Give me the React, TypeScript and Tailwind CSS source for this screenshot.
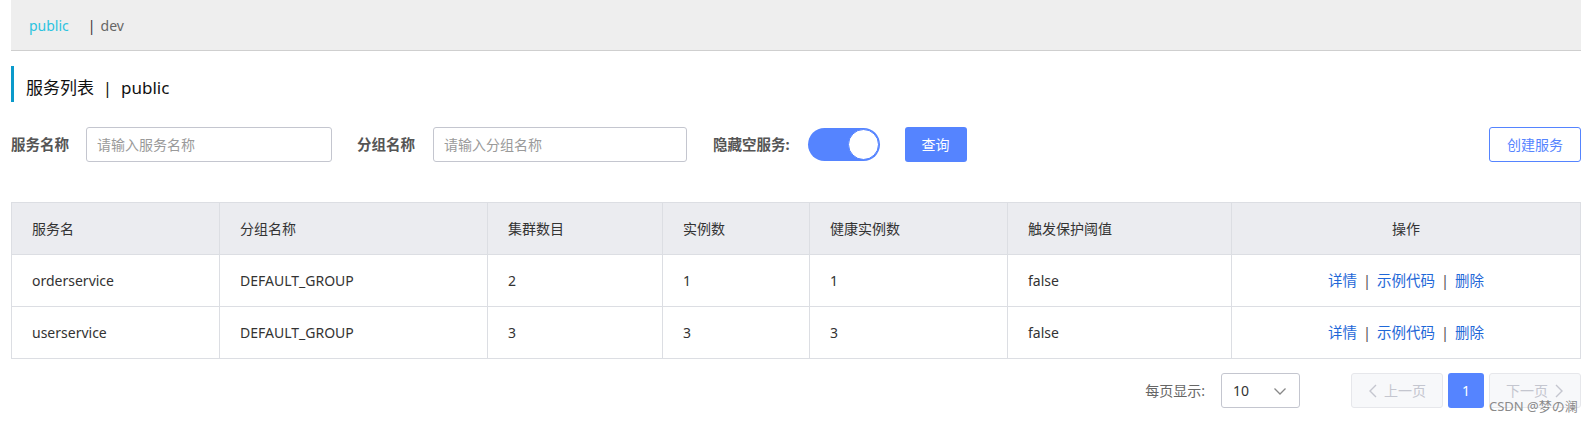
import * as React from "react";

type Row = {
  name: string;
  group: string;
  clusters: number;
  instances: number;
  healthy: number;
  threshold: string;
};

const rows: Row[] = [
  { name: "orderservice", group: "DEFAULT_GROUP", clusters: 2, instances: 1, healthy: 1, threshold: "false" },
  { name: "userservice", group: "DEFAULT_GROUP", clusters: 3, instances: 3, healthy: 3, threshold: "false" },
];

const font = {
  fontFamily: '"Noto Sans", "Noto Sans CJK SC", sans-serif',
};

export default function App() {
  return (
    <div className="relative h-[422px] w-[1591px] bg-white pl-[11px] pr-[10px] text-[14px] text-[#333]" style={font}>
      {/* namespace bar */}
      <div className="flex h-[51px] items-center border-b border-[#cfcfcf] bg-[#eeeeee] pl-[18px]">
        <span className="text-[#2cc3e0]">public</span>
        <span className="ml-[19px] text-[#333]">|</span>
        <span className="ml-[5px] text-[#666]">dev</span>
      </div>

      {/* title */}
      <div className="mt-[15px] flex h-[36px] items-end border-l-[3px] border-[#0a9acb] pb-[2px] pl-[12px] text-[17px] leading-[24px] text-[#111]">
        服务列表&nbsp;&nbsp;|&nbsp;&nbsp;public
      </div>

      {/* search row */}
      <div className="mt-[25px] flex h-[35px] items-center">
        <span className="text-[14.5px] font-bold text-[#555]">服务名称</span>
        <input
          className="ml-[17px] h-[35px] w-[246px] rounded-[3px] border border-[#c4c6cf] px-[10px] text-[14px] outline-none placeholder:text-[#9a9a9a]"
          placeholder="请输入服务名称"
        />
        <span className="ml-[25px] text-[14.5px] font-bold text-[#555]">分组名称</span>
        <input
          className="ml-[18px] h-[35px] w-[254px] rounded-[3px] border border-[#c4c6cf] px-[10px] text-[14px] outline-none placeholder:text-[#9a9a9a]"
          placeholder="请输入分组名称"
        />
        <span className="ml-[26px] text-[14.5px] font-bold text-[#555]">隐藏空服务:</span>
        <div className="ml-[18px] flex h-[33px] w-[72px] items-center justify-end rounded-full bg-[#5584ff] pr-[1px]">
          <div className="h-[31px] w-[31px] rounded-full border border-[#5584ff] bg-white" />
        </div>
        <button className="ml-[25px] h-[35px] w-[62px] rounded-[3px] bg-[#5584ff] text-[14px] text-white">
          查询
        </button>
        <div className="flex-1" />
        <button className="h-[35px] w-[92px] rounded-[3px] border border-[#5584ff] bg-white text-[14px] text-[#5584ff]">
          创建服务
        </button>
      </div>

      {/* table */}
      <table className="mt-[40px] w-[1570px] table-fixed border-collapse border border-[#dcdee3]">
        <colgroup>
          <col className="w-[208px]" />
          <col className="w-[268px]" />
          <col className="w-[175px]" />
          <col className="w-[147px]" />
          <col className="w-[198px]" />
          <col className="w-[224px]" />
          <col />
        </colgroup>
        <thead>
          <tr className="h-[52px] bg-[#ebecf0] text-left">
            {["服务名", "分组名称", "集群数目", "实例数", "健康实例数", "触发保护阈值"].map((h) => (
              <th key={h} className="border border-[#dcdee3] pl-[20px] font-normal">
                {h}
              </th>
            ))}
            <th className="border border-[#dcdee3] text-center font-normal">操作</th>
          </tr>
        </thead>
        <tbody>
          {rows.map((r) => (
            <tr key={r.name} className="h-[52px]">
              <td className="border border-[#dcdee3] pl-[20px]">{r.name}</td>
              <td className="border border-[#dcdee3] pl-[20px]">{r.group}</td>
              <td className="border border-[#dcdee3] pl-[20px]">{r.clusters}</td>
              <td className="border border-[#dcdee3] pl-[20px]">{r.instances}</td>
              <td className="border border-[#dcdee3] pl-[20px]">{r.healthy}</td>
              <td className="border border-[#dcdee3] pl-[20px]">{r.threshold}</td>
              <td className="border border-[#dcdee3] text-center text-[14.5px]">
                <a className="text-[#1f68d8]">详情</a>
                <span className="mx-[6px] text-[#555]">|</span>
                <a className="text-[#1f68d8]">示例代码</a>
                <span className="mx-[6px] text-[#555]">|</span>
                <a className="text-[#1f68d8]">删除</a>
              </td>
            </tr>
          ))}
        </tbody>
      </table>

      {/* pagination */}
      <div className="mt-[14px] flex h-[35px] items-center justify-end">
        <span className="text-[#666]">每页显示:</span>
        <div className="ml-[16px] flex h-[35px] w-[79px] items-center justify-between rounded-[3px] border border-[#c4c6cf] pl-[11px] pr-[12px]">
          <span className="text-[#333]">10</span>
          <svg width="14" height="14" viewBox="0 0 14 14" fill="none" stroke="#888" strokeWidth="1.3">
            <path d="M1.5 4.5 L7 10 L12.5 4.5" />
          </svg>
        </div>
        <button className="ml-[51px] flex h-[35px] w-[92px] items-center justify-center gap-[6px] rounded-[3px] border border-[#e6e7eb] bg-[#f7f8fa] text-[#c4c6cf]">
          <svg width="10" height="14" viewBox="0 0 10 14" fill="none" stroke="#c4c6cf" strokeWidth="1.4">
            <path d="M8 1 L2 7 L8 13" />
          </svg>
          上一页
        </button>
        <button className="ml-[5px] h-[35px] w-[36px] rounded-[3px] bg-[#5584ff] text-white">1</button>
        <button className="ml-[5px] flex h-[35px] w-[92px] items-center justify-center gap-[6px] rounded-[3px] border border-[#e6e7eb] bg-[#f7f8fa] text-[#c4c6cf]">
          下一页
          <svg width="10" height="14" viewBox="0 0 10 14" fill="none" stroke="#c4c6cf" strokeWidth="1.4">
            <path d="M2 1 L8 7 L2 13" />
          </svg>
        </button>
      </div>

      <span className="absolute left-[1489px] top-[398px] text-[13px] leading-[16px] text-[#8a8a8a]">CSDN @梦の澜</span>
    </div>
  );
}
